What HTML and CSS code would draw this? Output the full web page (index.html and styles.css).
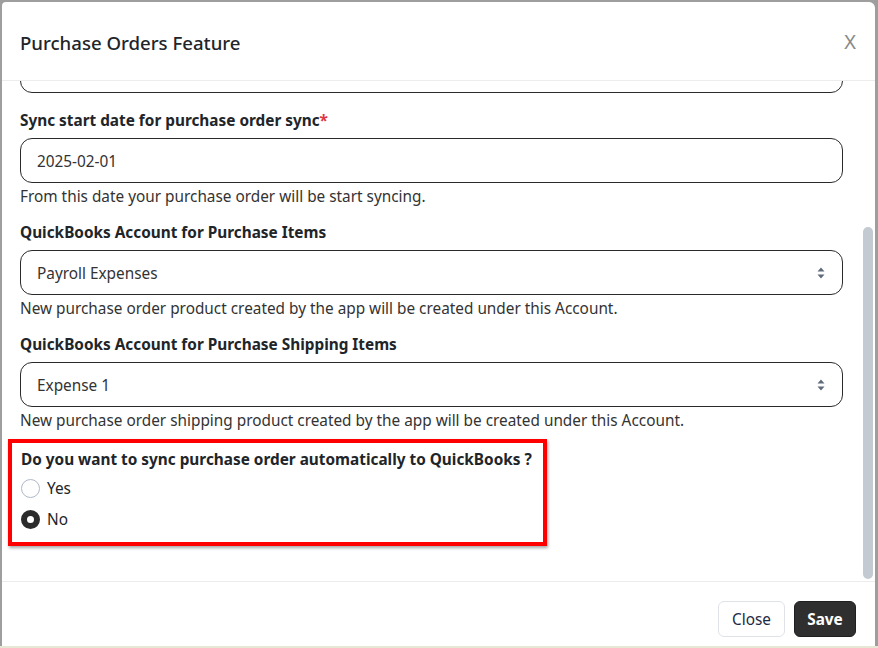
FILE: index.html
```html
<!DOCTYPE html>
<html lang="en">
<head>
  <meta charset="UTF-8" />
  <title>Purchase Orders Feature</title>
  <link rel="stylesheet" href="styles.css">
</head>
<body>
  <div class="modal">
    <div class="modal-header">
      <div class="modal-title">Purchase Orders Feature</div>
      <div class="close-x">X</div>
    </div>

    <div class="modal-body">
      <div class="body-content">
        <div class="form-group cut">
          <div class="form-control"></div>
        </div>

        <div class="form-group">
          <div class="form-label">Sync start date for purchase order sync<span class="req">*</span></div>
          <div class="form-control">2025-02-01</div>
          <div class="help">From this date your purchase order will be start syncing.</div>
        </div>

        <div class="form-group">
          <div class="form-label">QuickBooks Account for Purchase Items</div>
          <div class="form-control select">
            <span>Payroll Expenses</span>
            <svg class="arrows" width="10" height="16" viewBox="0 0 10 16"><path d="M5 2.5 L8.5 6.5 H1.5 Z M5 13.5 L8.5 9.5 H1.5 Z" fill="#5f6b78"/></svg>
          </div>
          <div class="help">New purchase order product created by the app will be created under this Account.</div>
        </div>

        <div class="form-group">
          <div class="form-label">QuickBooks Account for Purchase Shipping Items</div>
          <div class="form-control select">
            <span>Expense 1</span>
            <svg class="arrows" width="10" height="16" viewBox="0 0 10 16"><path d="M5 2.5 L8.5 6.5 H1.5 Z M5 13.5 L8.5 9.5 H1.5 Z" fill="#5f6b78"/></svg>
          </div>
          <div class="help">New purchase order shipping product created by the app will be created under this Account.</div>
        </div>

        <div class="form-group marked">
          <div class="form-label">Do you want to sync purchase order automatically to QuickBooks ?</div>
          <div class="radio-row">
            <span class="radio"></span>
            <span>Yes</span>
          </div>
          <div class="radio-row">
            <span class="radio checked"></span>
            <span>No</span>
          </div>
        </div>
      </div>

      <div class="scrollbar">
        <div class="thumb"></div>
      </div>
    </div>

    <div class="modal-footer">
      <button class="btn btn-light">Close</button>
      <button class="btn btn-dark">Save</button>
    </div>
  </div>
  <div class="strip"></div>
</body>
</html>
```

FILE: styles.css
```css
html, body {
  margin: 0;
  height: 100%;
}

body {
  background-color: #9e9e9e;
  font-family: "Noto Sans", "Open Sans", sans-serif;
  color: #212529;
  padding: 2px 3px 0 2px;
  box-sizing: border-box;
  overflow: hidden;
  display: flex;
  flex-direction: column;
}

.modal {
  height: 644px;
  background-color: white;
  border-radius: 4px 6px 0 0;
  display: flex;
  flex-direction: column;
}

.strip {
  height: 2px;
  margin: 0 -3px 0 -2px;
  background-color: #e7e7d5;
}

.modal-header {
  height: 78px;
  display: flex;
  align-items: center;
  justify-content: space-between;
  padding: 0 19px 0 18px;
  border-bottom: 1px solid #ececec;
}

.modal-title {
  font-size: 18.6px;
  font-weight: 500;
  margin-top: 2px;
}

.close-x {
  font-size: 20px;
  color: #8a8a8a;
  margin-top: 1px;
}

.modal-body {
  height: 500px;
  display: flex;
  overflow: hidden;
}

.body-content {
  flex: 1;
  padding: 0 20px 0 18px;
}

.scrollbar {
  width: 12px;
}

.thumb {
  width: 10px;
  height: 352px;
  margin-top: 146px;
  border-radius: 5px;
  background-color: #c3cad2;
}

.form-group {
  margin-bottom: 14px;
}

.form-group.cut {
  margin-top: -33px;
  margin-bottom: 16px;
}

.form-label {
  font-size: 15.35px;
  font-weight: bold;
  line-height: 22px;
  margin-bottom: 7px;
}

.req {
  color: #dc3545;
}

.form-control {
  height: 45px;
  box-sizing: border-box;
  border: 1px solid #2b2b2b;
  border-radius: 12px;
  padding: 0 16px;
  font-size: 15.35px;
  color: #333;
  display: flex;
  align-items: center;
}

.form-control.select {
  justify-content: space-between;
  padding-right: 16px;
}

.help {
  font-size: 15.35px;
  line-height: 22px;
  margin-top: 2px;
  color: #333;
}

.form-group.marked {
  margin: -6px 0 0 -12px;
  width: 522px;
  border: 4px solid #ff0000;
  padding: 5px 0 12px 9px;
  box-shadow: 1px 2px 3px rgba(0, 0, 0, 0.35);
}

.marked .form-label {
  margin-bottom: 7px;
}

.radio-row {
  display: flex;
  align-items: center;
  gap: 7px;
  font-size: 15.35px;
  line-height: 22px;
  margin-bottom: 9px;
}

.radio-row:last-child {
  margin-bottom: 0;
}

.radio {
  width: 19px;
  height: 19px;
  box-sizing: border-box;
  border: 1px solid #aeb9c8;
  border-radius: 50%;
  background-color: white;
}

.radio.checked {
  border: 6.5px solid #2b2b2b;
}

.modal-footer {
  flex: 1;
  border-top: 1px solid #ececec;
  display: flex;
  justify-content: flex-end;
  align-items: flex-start;
  gap: 9px;
  padding: 19px 19px 0 0;
}

.btn {
  height: 36px;
  border-radius: 6px;
  font-family: "Noto Sans", "Open Sans", sans-serif;
  font-size: 15.35px;
  padding: 0 12px;
  cursor: pointer;
}

.btn-light {
  background-color: white;
  border: 1px solid #dfe3e8;
  color: #1d2a44;
  width: 67px;
}

.btn-dark {
  background-color: #2f2f2f;
  border: 1px solid #1f1f1f;
  color: white;
  font-weight: bold;
  width: 62px;
}
```
